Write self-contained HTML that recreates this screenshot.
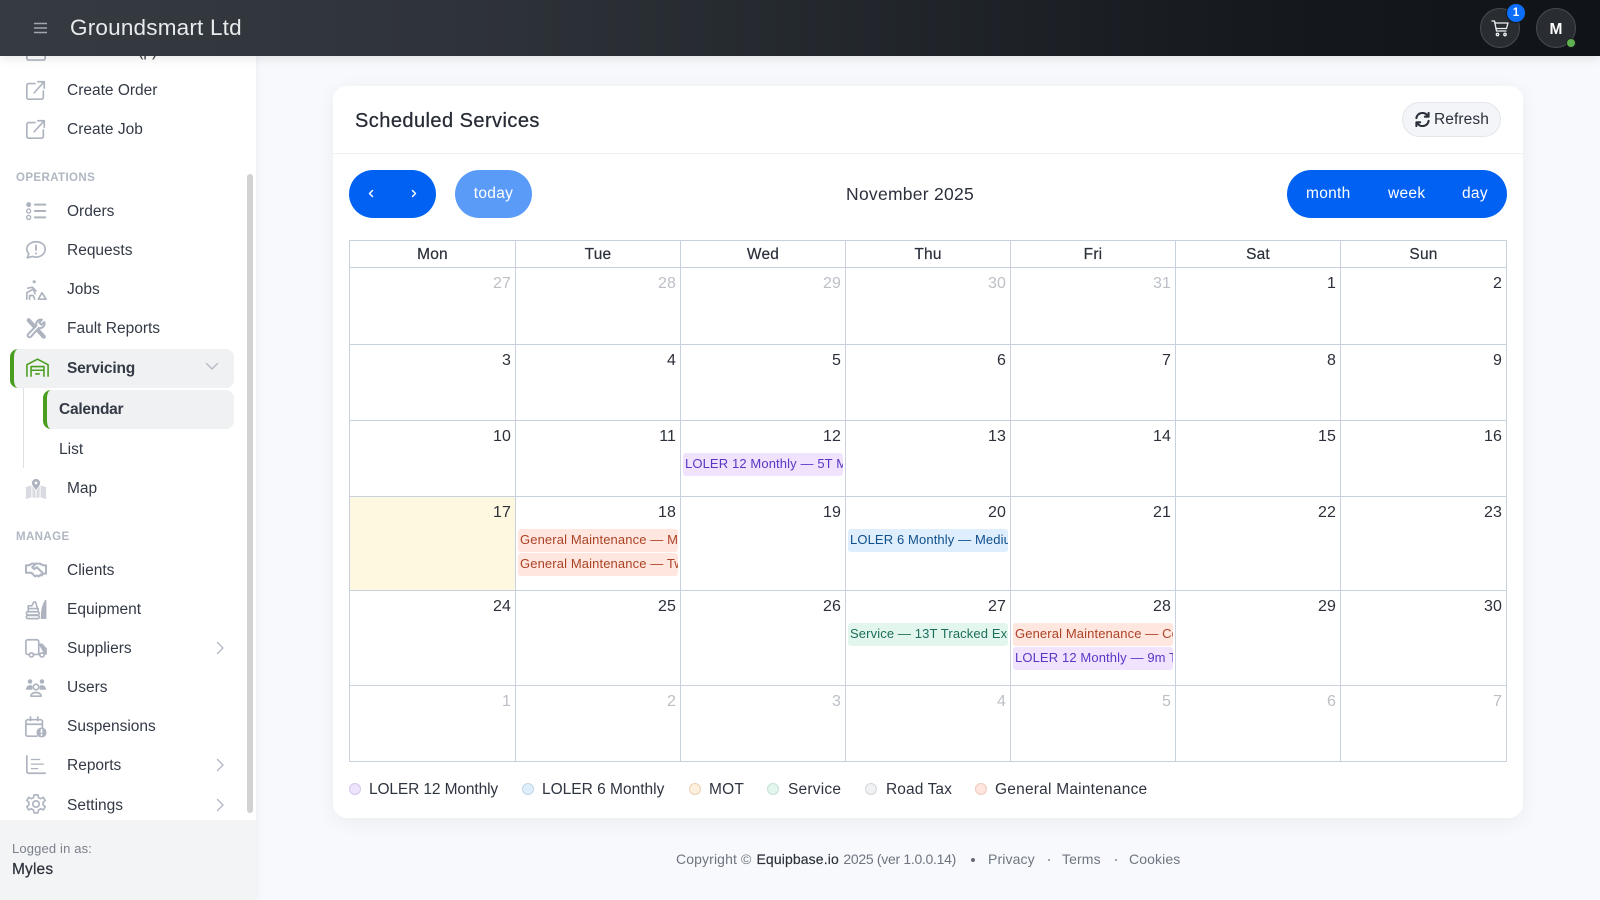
<!DOCTYPE html>
<html lang="en"><head><meta charset="utf-8"><title>Scheduled Services</title>
<style>
*{box-sizing:border-box}
html,body{margin:0;padding:0;width:1600px;height:900px;overflow:hidden;background:#f7f9fc;font-family:"Liberation Sans",sans-serif;color:#2b303a}
.a{position:absolute}
.hdr{left:0;top:0;width:1600px;height:56px;background:linear-gradient(90deg,#363b42 0%,#2e3339 30%,#15191e 80%,#101418 100%);box-shadow:0 2px 10px rgba(0,0,0,.1);z-index:5}
.side{left:0;top:0;width:256px;height:900px;background:#fff;box-shadow:2px 0 6px rgba(20,30,50,.04);overflow:hidden}
.it{position:absolute;left:67px;margin-top:1px;font-size:15.5px;letter-spacing:0;line-height:20px;color:#333a46;white-space:nowrap}
.sec{position:absolute;left:16px;margin-top:1px;font-size:11.5px;font-weight:700;letter-spacing:.4px;color:#b0b6c2;line-height:14px}
.ic{position:absolute;left:25px;margin-top:1px;width:22px;height:22px;fill:none;stroke:#adb3bf;stroke-width:1.8;stroke-linecap:round;stroke-linejoin:round}
.chev{position:absolute;width:14px;height:14px;fill:none;stroke:#b4bac5;stroke-width:1.4;stroke-linecap:round;stroke-linejoin:round}
.card{left:333px;top:86px;width:1190px;height:732px;background:#fff;border-radius:14px;box-shadow:0 4px 20px rgba(30,40,70,.06)}
.btn{position:absolute;top:170px;height:48px;border-radius:24px;background:#0061f2;color:#fff;font-size:15.5px;letter-spacing:.3px;line-height:48px}
table{position:absolute;left:349px;top:240px;width:1157px;height:522px;border-collapse:collapse;table-layout:fixed}
td,th{border:1px solid #c9d1df;padding:0;vertical-align:top;position:relative}
th{font-weight:500;font-size:15.5px;letter-spacing:.2px;padding-top:2px;line-height:24px;color:#2b303a;-webkit-text-stroke:.2px #2b303a}
td{font-size:16px;text-align:right;padding:6px 4px 0 0;line-height:20px;color:#2b303a;letter-spacing:.1px}
td.o{color:#bcc0c6}
.ev{position:absolute;left:2px;right:2px;height:23px;border-radius:3px;font-size:13px;line-height:22px;padding-left:2px;text-align:left;white-space:nowrap;overflow:hidden;letter-spacing:.12px}
.r{background:#ffe6df;color:#ac4326}.p{background:#efe3fe;color:#5b36c4}.b{background:#deeefc;color:#0f4f8c}.g{background:#e3f6ee;color:#1c6e5a}
.dot{position:absolute;top:783px;width:12px;height:12px;border-radius:50%;border:1px solid}
.lg{position:absolute;top:780px;font-size:15.5px;line-height:20px;letter-spacing:.22px;color:#2f3540;white-space:nowrap}
.ft{position:absolute;top:850px;font-size:14px;line-height:18px;letter-spacing:.12px;color:#6f7580;white-space:nowrap}
</style></head><body>

<div class="a side">
  <div class="it" style="top:41px">New Task (p)</div>
  <svg class="ic" style="top:38px" viewBox="0 0 24 24"><path d="M4 3h16a2 2 0 0 1 2 2v16a2 2 0 0 1-2 2H4a2 2 0 0 1-2-2V5a2 2 0 0 1 2-2z"/></svg>

  <div class="it" style="top:80px">Create Order</div>
  <svg class="ic" style="top:78px" viewBox="0 0 24 24"><path d="M11 5H4a2 2 0 0 0-2 2v13a2 2 0 0 0 2 2h14a2 2 0 0 0 2-2v-7"/><path d="M10 15 21 3M14 3h7v7"/></svg>
  <div class="it" style="top:119px">Create Job</div>
  <svg class="ic" style="top:117px" viewBox="0 0 24 24"><path d="M11 5H4a2 2 0 0 0-2 2v13a2 2 0 0 0 2 2h14a2 2 0 0 0 2-2v-7"/><path d="M10 15 21 3M14 3h7v7"/></svg>

  <div class="sec" style="top:170px">OPERATIONS</div>
  <div class="it" style="top:201px">Orders</div>
  <svg class="ic" style="top:199px;stroke-width:2.2" viewBox="0 0 24 24"><circle cx="4" cy="5" r="2.200" fill="#adb3bf" stroke-width="1"/><circle cx="4" cy="12" r="2.200" stroke-width="1.500"/><circle cx="4" cy="19" r="2.200" stroke-width="1.500"/><path d="M10 5h13M10 12h13M10 19h13" stroke-linecap="butt"/></svg>
  <div class="it" style="top:240px">Requests</div>
  <svg class="ic" style="top:238px" viewBox="0 0 24 24"><path d="M12 3C6.500 3 2 6.600 2 11c0 1.900.8 3.600 2.200 5L2.500 20.500 8 19c1.300.5 2.600.8 4 .8 5.500 0 10-3.900 10-8.800S17.500 3 12 3z"/><path d="M12 7v5M12 15.500v.5" stroke-width="2"/></svg>
  <div class="it" style="top:279px">Jobs</div>
  <svg class="ic" style="top:278px" viewBox="0 0 24 24"><circle cx="10" cy="3" r="1.700" fill="#adb3bf" stroke="none"/><path d="M2 22v-7l7-4 2 5M5 22v-4h4l1.500 4M3 10l5-1 4 4"/><path d="M14.500 22l4-7 4.500 7z"/></svg>
  <div class="it" style="top:318px">Fault Reports</div>
  <svg class="ic" style="top:316px" viewBox="0 0 24 24"><path d="M4 3.500l16.500 18" stroke-width="4.500"/><path d="M21 5.500l-3 3-2.500-2.500 3-3a5 5 0 0 0-6 6.500L3.500 18.500a2 2 0 0 0 3 3L15 12a5 5 0 0 0 6-6.500z" stroke-width="2.200" fill="#fff"/></svg>

  <div class="a" style="left:10px;top:349px;width:224px;height:39px;background:#f0f1f2;border-radius:8px;border-left:4px solid #4a9e1f"></div>
  <svg class="ic" style="top:357px;left:26px;width:23px;height:19px;stroke:#4a9e1f;stroke-width:1.700;stroke-linecap:butt" viewBox="0 0 25 20"><path d="M1 20V7l11.500-6L24 7v13"/><path d="M5.500 20V9h14v11"/><path d="M5.500 13h14M10 17h5"/></svg>
  <div class="it" style="top:358px;font-weight:700;letter-spacing:-.2px">Servicing</div>
  <svg class="chev" style="left:205px;top:359px" viewBox="0 0 14 14"><path d="M1.500 4.500 7 10l5.500-5.500"/></svg>

  <div class="a" style="left:23px;top:388px;width:1px;height:80px;background:#dcdfe3"></div>
  <div class="a" style="left:43px;top:390px;width:191px;height:39px;background:#f0f1f2;border-radius:8px;border-left:4px solid #4a9e1f"></div>
  <div class="it" style="left:59px;top:399px;font-weight:700;letter-spacing:-.25px">Calendar</div>
  <div class="it" style="left:59px;top:439px">List</div>

  <div class="it" style="top:478px">Map</div>
  <svg class="ic" style="top:477px;stroke:none;fill:#d8dbe0" viewBox="0 0 24 24"><path d="M1 10l6-2v13l-6 2zM8 9l3.500 5v8L8 21zM12.500 14 16 9v12l-3.500 1zM17 8l6 2v13l-6-2z"/><path d="M12 1a4.500 4.500 0 0 0-4.500 4.500C7.500 8.500 12 13 12 13s4.500-4.500 4.500-7.500A4.500 4.500 0 0 0 12 1z" fill="#adb3bf"/><circle cx="12" cy="5.500" r="1.500" fill="#fff"/></svg>

  <div class="sec" style="top:529px">MANAGE</div>
  <div class="it" style="top:560px">Clients</div>
  <svg class="ic" style="top:558px;stroke-width:2.200" viewBox="0 0 24 24"><path d="M1 7h3l4-2h4l-4 4 2 2 3-2 7 7-2 2-1-1-2 2-2-1-2 1-4-4H1zM23 7h-3l-4-2h-4M20 7l3 0v9h-3"/></svg>
  <div class="it" style="top:599px">Equipment</div>
  <svg class="ic" style="top:597px" viewBox="0 0 24 24"><rect x="1.500" y="15" width="14" height="3.500" rx="1.700"/><rect x="1.500" y="19" width="14" height="3.500" rx="1.700"/><path d="M3.500 14V8.500h4l2-4h2l3 9.500M3.500 11.500h11"/><path d="M18 22c0-8 1-14 4.500-19V22z" fill="#adb3bf"/></svg>
  <div class="it" style="top:638px">Suppliers</div>
  <svg class="ic" style="top:636px" viewBox="0 0 24 24"><path d="M5 19H3a2 2 0 0 1-2-2V5a2 2 0 0 1 2-2h10a2 2 0 0 1 2 2v14H9"/><path d="M15 8h3.500l4.500 5v5.500h-2" fill="#adb3bf"/><path d="M15 19h1"/><circle cx="7" cy="19.500" r="2.300"/><circle cx="18.500" cy="19.500" r="2.300"/></svg>
  <div class="it" style="top:677px">Users</div>
  <svg class="ic" style="top:675px" viewBox="0 0 24 24"><circle cx="5.500" cy="6" r="2.500" fill="#adb3bf" stroke="none"/><circle cx="18.500" cy="6" r="2.500" fill="#adb3bf" stroke="none"/><path d="M1 15c0-3 2-5 4.500-5S8 11 8 12v3zM23 15c0-3-2-5-4.500-5S16 11 16 12v3z" fill="#adb3bf" stroke="none"/><circle cx="12" cy="12" r="3"/><path d="M6.500 22c0-2.500 2.500-4 5.500-4s5.500 1.500 5.500 4z"/></svg>
  <div class="it" style="top:716px">Suspensions</div>
  <svg class="ic" style="top:715px" viewBox="0 0 24 24"><path d="M13 22H3a2 2 0 0 1-2-2V6a2 2 0 0 1 2-2h14a2 2 0 0 1 2 2v7M1 9h18M6 1v4M14 1v4"/><circle cx="18" cy="18" r="5.500" fill="#adb3bf" stroke="none"/><path d="M18 15v3M18 20.500v.5" stroke="#fff"/></svg>
  <div class="it" style="top:755px">Reports</div>
  <svg class="ic" style="top:753px" viewBox="0 0 24 24"><path d="M2 2v17a2 2 0 0 0 2 2h18"/><path d="M7 6h9M7 11h13M7 16h7" stroke-width="1.400"/></svg>
  <div class="it" style="top:795px">Settings</div>
  <svg class="ic" style="top:792px" viewBox="0 0 24 24"><circle cx="12" cy="12" r="3.500"/><path d="M10 2h4l.7 3 2.500 1.200 2.800-1.400 2 3.400-2.300 2 .1 2.800 2.200 2-2 3.400-2.800-1.200-2.500 1.500-.7 3h-4l-.7-3-2.500-1.500-2.800 1.200-2-3.400 2.200-2 .1-2.800-2.300-2 2-3.400 2.800 1.400L9.300 5z"/></svg>

  <svg class="chev" style="left:213px;top:641px" viewBox="0 0 14 14"><path d="M4.500 1.500 10 7l-5.500 5.500"/></svg>
  <svg class="chev" style="left:213px;top:758px" viewBox="0 0 14 14"><path d="M4.500 1.500 10 7l-5.500 5.500"/></svg>
  <svg class="chev" style="left:213px;top:798px" viewBox="0 0 14 14"><path d="M4.500 1.500 10 7l-5.500 5.500"/></svg>

  <div class="a" style="left:247px;top:174px;width:6px;height:639px;background:#d2d2d2;border-radius:3px"></div>
  <div class="a" style="left:0;top:820px;width:256px;height:80px;background:#f3f4f5"></div>
  <div class="a" style="left:12px;top:841px;font-size:13px;letter-spacing:.15px;line-height:16px;color:#7a808a">Logged in as:</div>
  <div class="a" style="left:12px;top:860px;font-size:15.500px;letter-spacing:.15px;line-height:20px;color:#2b303a;-webkit-text-stroke:.2px #2b303a">Myles</div>
</div>

<div class="a hdr">
  <svg class="a" style="left:34px;top:22px" width="13" height="12" fill="none" stroke="#a2a7ad" stroke-width="1.500"><path d="M0 1.500h13M0 6h13M0 10.500h13"/></svg>
  <div class="a" style="left:70px;top:14px;font-size:22.500px;line-height:28px;letter-spacing:.2px;color:#e8eaec;white-space:nowrap">Groundsmart Ltd</div>
  <div class="a" style="left:1480px;top:8px;width:40px;height:40px;border-radius:50%;background:#292d32;border:1px solid #484c51"></div>
  <svg class="a" style="left:1491px;top:20px" width="18" height="17" fill="none" stroke="#f0f1f2" stroke-width="1.300" stroke-linecap="round" stroke-linejoin="round" viewBox="0 0 18 17"><path d="M1 1h2.500l2 10h9.500"/><path d="M3.800 3H17l-1.500 5.500H5"/><circle cx="6.500" cy="14.500" r="1.200"/><circle cx="14" cy="14.500" r="1.200"/></svg>
  <div class="a" style="left:1506px;top:3px;width:20px;height:20px;border-radius:50%;background:#0d6efd;border:1px solid #16191d;color:#fff;font-size:11.500px;font-weight:700;text-align:center;line-height:18px">1</div>
  <div class="a" style="left:1536px;top:8px;width:40px;height:40px;border-radius:50%;background:#292d32;border:1px solid #484c51;color:#fff;font-weight:700;font-size:15.500px;text-align:center;line-height:41px">M</div>
  <div class="a" style="left:1567px;top:39px;width:8px;height:8px;border-radius:50%;background:#5fb04e;box-shadow:0 0 0 1px #1c2024"></div>
</div>

<div class="a card"></div>
<div class="a" style="left:333px;top:153px;width:1190px;height:1px;background:#eff1f4"></div>
<div class="a" style="left:355px;top:108px;font-size:20px;line-height:26px;letter-spacing:.45px;color:#262b35;-webkit-text-stroke:.25px #262b35;white-space:nowrap">Scheduled Services</div>
<div class="a" style="left:1402px;top:102px;width:99px;height:35px;border-radius:18px;background:#f3f5f9;border:1px solid #e3e6eb"></div>
<svg class="a" style="left:1415px;top:112px" width="15" height="15" viewBox="0 0 16 16" fill="none" stroke="#2b303a" stroke-width="2.200" stroke-linecap="round" stroke-linejoin="round"><path d="M1.500 6.500A6.500 6.500 0 0 1 13 3.500M14.500 9.500A6.500 6.500 0 0 1 3 12.500"/><path d="M14.500 1v4h-4M1.500 15v-4h4"/></svg>
<div class="a" style="left:1434px;top:110px;font-size:15.500px;line-height:20px;letter-spacing:.1px;color:#2b303a">Refresh</div>

<div class="btn" style="left:349px;width:87px"></div>
<svg class="a" style="left:367px;top:188px" width="8" height="11" fill="none" stroke="#fff" stroke-width="1.500" stroke-linecap="round" stroke-linejoin="round"><path d="M5.500 2.500 2.500 5.500 5.500 8.500"/></svg>
<svg class="a" style="left:410px;top:188px" width="8" height="11" fill="none" stroke="#fff" stroke-width="1.500" stroke-linecap="round" stroke-linejoin="round"><path d="M2.500 2.500 5.500 5.500 2.500 8.500"/></svg>
<div class="btn" style="left:455px;width:77px;background:#5b9bf8;text-align:center">today</div>
<div class="a" style="left:810px;width:200px;top:184px;text-align:center;font-size:17.500px;line-height:20px;letter-spacing:.26px;color:#2b303a">November 2025</div>
<div class="btn" style="left:1287px;width:220px"></div>
<div class="btn" style="left:1306px;background:none;border-radius:0">month</div>
<div class="btn" style="left:1388px;background:none;border-radius:0">week</div>
<div class="btn" style="left:1462px;background:none;border-radius:0">day</div>

<table>
<colgroup><col style="width:166px"><col style="width:165px"><col style="width:165px"><col style="width:165px"><col style="width:165px"><col style="width:165px"><col style="width:166px"></colgroup>
<tr style="height:27px"><th>Mon</th><th>Tue</th><th>Wed</th><th>Thu</th><th>Fri</th><th>Sat</th><th>Sun</th></tr>
<tr style="height:77px"><td class="o">27</td><td class="o">28</td><td class="o">29</td><td class="o">30</td><td class="o">31</td><td>1</td><td>2</td></tr>
<tr style="height:76px"><td>3</td><td>4</td><td>5</td><td>6</td><td>7</td><td>8</td><td>9</td></tr>
<tr style="height:76px"><td>10</td><td>11</td><td>12<div class="ev p" style="top:32px">LOLER 12 Monthly — 5T Mini Excavator</div></td><td>13</td><td>14</td><td>15</td><td>16</td></tr>
<tr style="height:94px"><td style="background:#fef8e0">17</td><td>18<div class="ev r" style="top:32px">General Maintenance — Medium Dumper</div><div class="ev r" style="top:56px">General Maintenance — Twin Drum Roller</div></td><td>19</td><td>20<div class="ev b" style="top:32px">LOLER 6 Monthly — Medium Crane</div></td><td>21</td><td>22</td><td>23</td></tr>
<tr style="height:95px"><td>24</td><td>25</td><td>26</td><td>27<div class="ev g" style="top:32px">Service — 13T Tracked Excavator</div></td><td>28<div class="ev r" style="top:32px">General Maintenance — Compact Loader</div><div class="ev p" style="top:56px">LOLER 12 Monthly — 9m Telehandler</div></td><td>29</td><td>30</td></tr>
<tr style="height:76px"><td class="o">1</td><td class="o">2</td><td class="o">3</td><td class="o">4</td><td class="o">5</td><td class="o">6</td><td class="o">7</td></tr>
</table>

<div class="dot" style="left:349px;background:#efe3fe;border-color:#d4c5ea"></div><div class="lg" style="left:369px;letter-spacing:-.12px">LOLER 12 Monthly</div>
<div class="dot" style="left:522px;background:#deeefc;border-color:#c2d4e6"></div><div class="lg" style="left:542px;letter-spacing:0">LOLER 6 Monthly</div>
<div class="dot" style="left:689px;background:#fff0de;border-color:#ead0b4"></div><div class="lg" style="left:709px">MOT</div>
<div class="dot" style="left:767px;background:#e3f6ee;border-color:#c6dfd4"></div><div class="lg" style="left:788px">Service</div>
<div class="dot" style="left:865px;background:#f1f2f3;border-color:#d4d6d9"></div><div class="lg" style="left:886px;letter-spacing:.1px">Road Tax</div>
<div class="dot" style="left:975px;background:#ffe6df;border-color:#eccabf"></div><div class="lg" style="left:995px">General Maintenance</div>

<div class="ft" style="left:676px">Copyright © <span style="color:#2b303a;-webkit-text-stroke:.15px #2b303a;margin-left:1px">Equipbase.io</span> <span style="letter-spacing:-.3px;margin-left:.5px">2025 (ver 1.0.0.14)</span></div>
<div class="a" style="left:971px;top:858px;width:4px;height:4px;border-radius:50%;background:#666c76"></div>
<div class="ft" style="left:988px">Privacy</div>
<div class="a" style="left:1048px;top:859px;width:2px;height:2px;border-radius:50%;background:#8a9099"></div>
<div class="ft" style="left:1062px">Terms</div>
<div class="a" style="left:1115px;top:859px;width:2px;height:2px;border-radius:50%;background:#8a9099"></div>
<div class="ft" style="left:1129px">Cookies</div>
</body></html>
